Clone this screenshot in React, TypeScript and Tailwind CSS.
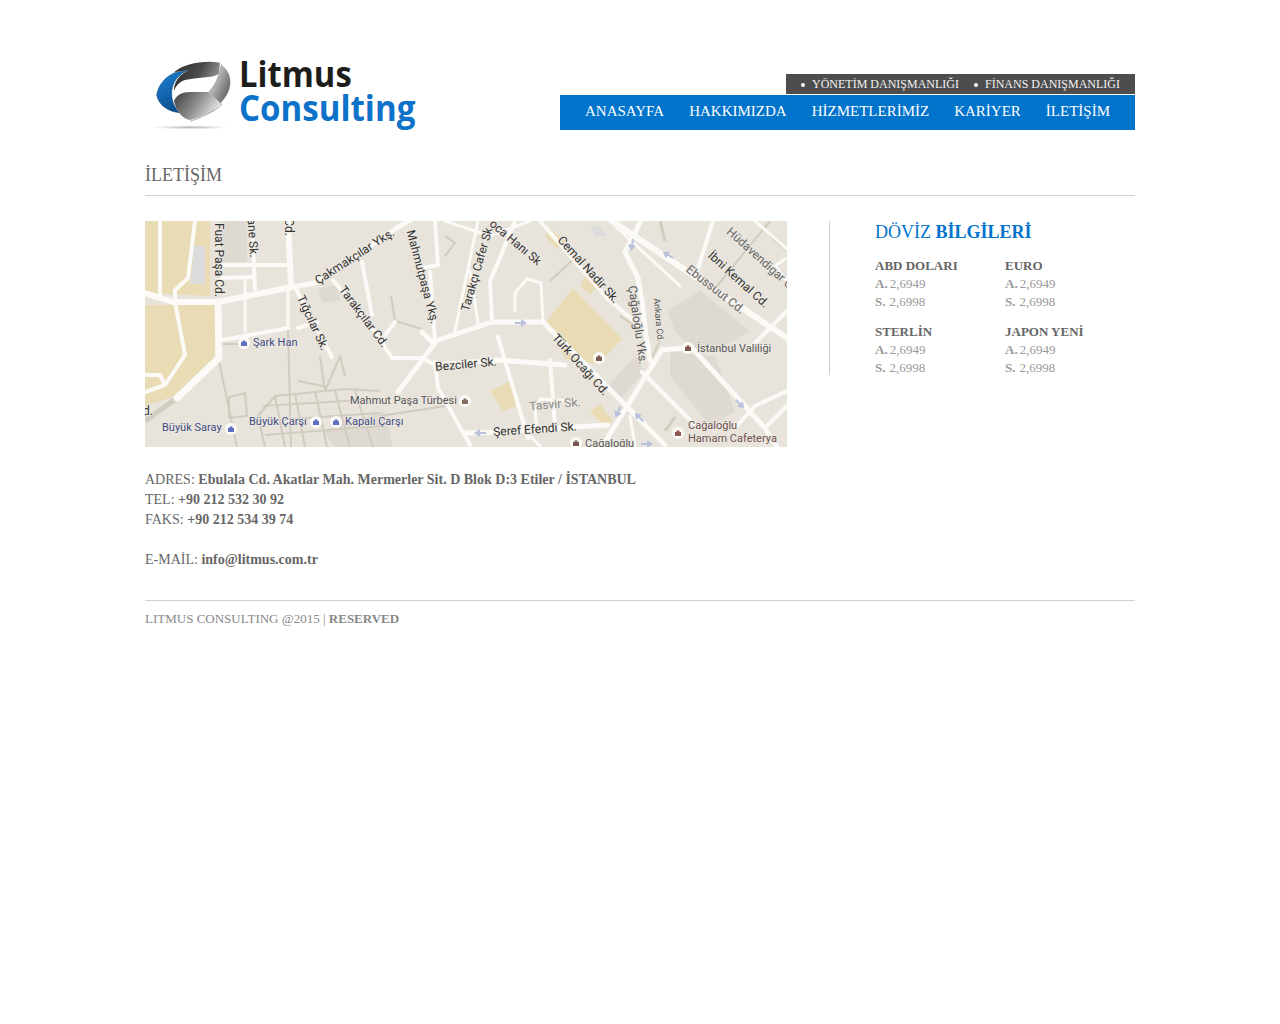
const serif = { fontFamily: '"Liberation Serif", "Times New Roman", serif' }

const navItems = ['ANASAYFA', 'HAKKIMIZDA', 'HİZMETLERİMİZ', 'KARİYER', 'İLETİŞİM']

const rates = [
  { name: 'ABD DOLARI' },
  { name: 'EURO' },
  { name: 'STERLİN' },
  { name: 'JAPON YENİ' },
]

function Logo() {
  return (
    <svg width="290" height="90" viewBox="15 0 870 270" className="block">
      <defs>
        <linearGradient id="lgTop" x1="0" y1="0" x2="1" y2="0.3">
          <stop offset="0" stopColor="#2b2b2b" />
          <stop offset="0.6" stopColor="#4a4a4a" />
          <stop offset="1" stopColor="#8d8d8d" />
        </linearGradient>
        <linearGradient id="lgRight" x1="0" y1="0" x2="1" y2="0.6">
          <stop offset="0" stopColor="#f4f4f4" />
          <stop offset="0.6" stopColor="#b5b5b5" />
          <stop offset="1" stopColor="#555" />
        </linearGradient>
        <linearGradient id="lgInner" x1="0" y1="0" x2="1" y2="0.4">
          <stop offset="0" stopColor="#3c3c3c" />
          <stop offset="0.55" stopColor="#8e8e8e" />
          <stop offset="1" stopColor="#e4e4e4" />
        </linearGradient>
        <linearGradient id="lgBlue" x1="0" y1="0" x2="0.5" y2="1">
          <stop offset="0" stopColor="#1c82d6" />
          <stop offset="1" stopColor="#0b4f8f" />
        </linearGradient>
        <radialGradient id="lgShadow">
          <stop offset="0" stopColor="#b8b8b8" />
          <stop offset="1" stopColor="#ffffff" />
        </radialGradient>
      </defs>
      <ellipse cx="150" cy="232" rx="115" ry="6" fill="url(#lgShadow)" />
      <path d="M50 135 C55 105 75 80 105 68 L145 60 C115 72 98 95 95 125 C94 150 102 170 118 188 C85 185 55 165 50 135 Z" fill="url(#lgBlue)" stroke="#0a3f70" strokeWidth="1.5" />
      <path d="M102 67 C130 42 190 30 240 38 L236 72 C215 85 170 82 135 90 C118 96 108 108 102 122 C100 100 118 72 147 60 Z" fill="url(#lgTop)" />
      <path d="M243 44 C265 60 276 85 268 115 C258 155 205 200 150 214 C190 198 225 185 246 164 L206 126 C222 108 234 92 243 44 Z" fill="url(#lgRight)" stroke="#777" strokeWidth="1" />
      <path d="M102 152 C110 136 126 126 150 126 L205 126 L246 165 C220 185 185 200 150 210 C125 205 107 180 102 152 Z" fill="url(#lgInner)" />
      <text x="297" y="110" textLength="338" lengthAdjust="spacingAndGlyphs" fill="#1d1d1b" fontSize="108" fontWeight="700" fontFamily='"Open Sans", sans-serif'>Litmus</text>
      <text x="297" y="212" textLength="529" lengthAdjust="spacingAndGlyphs" fill="#0d72c9" fontSize="108" fontWeight="700" fontFamily='"Open Sans", sans-serif'>Consulting</text>
    </svg>
  )
}

const whiteRoads: [string, number][] = [
  ['M147 66 L170 62 L253 6 L267 -2', 5],
  ['M0 72 L28 81 L73 81 L147 66', 6],
  ['M73 81 L74 137 L32 177', 7],
  ['M143 0 L146 66', 6],
  ['M143 66 L143 107', 3],
  ['M78 119 L143 107', 4],
  ['M100 59 L100 111', 3],
  ['M77 44 L147 44', 4],
  ['M107 0 L110 69', 4],
  ['M77 57 L108 56', 4],
  ['M15 0 L15 74', 4],
  ['M50 0 L43 57 L30 69 L30 81 L40 134 L20 164 L0 171', 4],
  ['M0 154 L15 154 L20 164', 4],
  ['M150 66 L187 136', 4],
  ['M153 107 L173 101', 4],
  ['M188 59 L230 111 L247 137 L277 137 L290 144', 4],
  ['M217 41 L227 94', 4],
  ['M250 101 L240 114', 4],
  ['M290 0 L293 44 L277 47', 4],
  ['M285 51 L290 121', 4],
  ['M277 111 L287 121 L347 101 L398 101', 5],
  ['M290 122 L253 171', 5],
  ['M290 141 L293 167 L325 224', 4],
  ['M290 144 L353 139 L420 144', 5],
  ['M398 101 L520 224', 5],
  ['M395 0 L463 78 L495 105', 4],
  ['M398 101 L396 62 L382 58 L370 72 L370 90', 3],
  ['M497 -2 L480 31 L493 57 L497 81 L500 107 L505 140', 5],
  ['M467 0 L642 117', 6],
  ['M540 127 L517 129 L458 224', 5],
  ['M547 127 L620 207 L632 226', 5],
  ['M497 151 L553 207', 4],
  ['M568 0 L550 57', 4],
  ['M353 116 L383 217', 4],
  ['M405 139 L410 205', 4],
  ['M320 212 L353 211 L463 204', 5],
  ['M430 180 L395 178 L390 190 L392 208', 3],
  ['M333 0 L310 110', 3],
  ['M347 101 L345 60 L352 44 L370 0', 4],
  ['M333 102 L325 50', 3],
  ['M300 0 L345 15 L385 0', 3],
  ['M610 0 L642 28', 3],
  ['M640 38 L630 45 L642 60', 3],
  ['M605 127 L642 90', 4],
  ['M590 207 L610 185 L642 170', 4],
  ['M620 207 L642 185', 4],
  ['M490 225 L485 195', 3],
  ['M395 225 L385 215', 3],
  ['M535 65 L470 5', 3],
]

const greyRoads: [string, number][] = [
  ['M77 123 L98 123 L100 111', 2],
  ['M74 140 L92 226', 2],
  ['M143 107 L146 226', 2],
  ['M175 135 L180 170 M200 155 L195 135 L180 170', 2],
  ['M153 160 L178 165', 2],
  ['M84 176 L100 172 L102 195 L84 197 Z', 2],
  ['M0 200 L32 177', 5],
  ['M113 195 L130 175 L200 168 L235 170', 2],
  ['M113 195 L120 226 M130 175 L140 226 M150 172 L160 226 M170 170 L182 226 M190 170 L205 226 M210 170 L228 226', 2],
  ['M118 185 L232 178 M116 200 L235 192 M120 214 L235 205', 2],
  ['M235 195 L300 185', 2],
  ['M246 75 L250 100 L277 108', 2],
  ['M300 15 L310 22 L300 35', 2],
  ['M405 60 L432 35', 2],
  ['M475 95 L505 115', 2],
  ['M505 140 L515 120', 2],
  ['M520 210 L530 196', 3],
  ['M568 70 L625 0', 2],
  ['M625 15 L642 30', 2],
  ['M520 20 L515 0', 3],
]

const labels: { t: string; x: number; y: number; r: number; s?: number; c?: string }[] = [
  { t: 'Fuat Paşa Cd.', x: 73, y: 39, r: 90 },
  { t: 'ane Sk.', x: 107, y: 17, r: 86 },
  { t: 'Cd.', x: 143, y: 6, r: 90 },
  { t: 'Çakmakçılar Ykş.', x: 210, y: 36, r: -33 },
  { t: 'Mahmutpaşa Ykş.', x: 277, y: 56, r: 75 },
  { t: 'Tığcılar Sk.', x: 167, y: 102, r: 65 },
  { t: 'Tarakçılar Cd.', x: 218, y: 96, r: 53 },
  { t: 'Bezciler Sk.', x: 321, y: 144, r: -5 },
  { t: 'Tarakçı Cafer Sk.', x: 333, y: 47, r: -74 },
  { t: 'oca Hanı Sk', x: 370, y: 22, r: 40 },
  { t: 'Cemal Nadir Sk.', x: 443, y: 49, r: 48 },
  { t: 'Çağaloğlu Yks.', x: 492, y: 104, r: 82, c: '#555' },
  { t: 'Ankara Cd.', x: 513, y: 99, r: 85, s: 9, c: '#555' },
  { t: 'Ebussuut Cd.', x: 570, y: 69, r: 38, c: '#666' },
  { t: 'İbni Kemal Cd.', x: 593, y: 59, r: 42 },
  { t: 'Hüdavendigar Cd', x: 617, y: 40, r: 42, c: '#666' },
  { t: 'Türk Ocağı Cd.', x: 435, y: 144, r: 48 },
  { t: 'Tasvir Sk.', x: 410, y: 184, r: -5, c: '#888' },
  { t: 'Şeref Efendi Sk.', x: 390, y: 209, r: -4 },
  { t: 'd.', x: 3, y: 191, r: 0 },
]

const places: { t: string; x: number; y: number; c?: string }[] = [
  { t: 'Şark Han', x: 108, y: 122, c: '#3f4a80' },
  { t: 'Mahmut Paşa Türbesi', x: 205, y: 180, c: '#555' },
  { t: 'Büyük Çarşı', x: 104, y: 201, c: '#3f4a80' },
  { t: 'Kapalı Çarşı', x: 200, y: 201, c: '#3f4a80' },
  { t: 'Büyük Saray', x: 17, y: 207, c: '#3f4a80' },
  { t: 'İstanbul Valiliği', x: 552, y: 128, c: '#555' },
  { t: 'Cağaloğlu', x: 440, y: 223, c: '#555' },
  { t: 'Cağaloğlu', x: 543, y: 205, c: '#6b4f4f' },
  { t: 'Hamam Cafeterya', x: 543, y: 218, c: '#6b4f4f' },
]

const pins: { x: number; y: number; c: string }[] = [
  { x: 99, y: 122, c: '#5f6fc0' },
  { x: 171, y: 201, c: '#5f6fc0' },
  { x: 191, y: 201, c: '#5f6fc0' },
  { x: 86, y: 208, c: '#5f6fc0' },
  { x: 320, y: 180, c: '#8b6a62' },
  { x: 454, y: 137, c: '#7a5a52' },
  { x: 543, y: 127, c: '#7a5a52' },
  { x: 431, y: 222, c: '#7a5a52' },
  { x: 533, y: 212, c: '#8b5a52' },
]

const arrows: { x: number; y: number; r: number }[] = [
  { x: 376, y: 102, r: 0 },
  { x: 487, y: 24, r: 100 },
  { x: 523, y: 34, r: 210 },
  { x: 595, y: 183, r: 45 },
  { x: 473, y: 191, r: 115 },
  { x: 494, y: 196, r: 225 },
  { x: 335, y: 212, r: 180 },
  { x: 502, y: 223, r: 0 },
]

function MapPicture() {
  return (
    <svg width="642" height="226" viewBox="0 0 642 226" className="block">
      <rect width="642" height="226" fill="#e8e4dc" />
      <g fill="#e9dcb5">
        <path d="M0 0 L65 0 L65 75 L0 72 Z" />
        <path d="M0 84 L70 84 L70 135 L30 175 L0 185 Z" />
        <path d="M402 100 L428 67 L477 118 L453 143 L420 138 Z" />
        <path d="M345 170 L365 160 L372 185 L358 190 Z" />
        <path d="M405 7 L420 20 L412 28 L400 15 Z" />
        <path d="M440 55 L452 65 L445 74 L435 65 Z" />
        <path d="M445 190 L455 183 L468 200 L460 206 Z" />
      </g>
      <g fill="#dedad2">
        <path d="M77 0 L102 0 L102 41 L77 41 Z" />
        <path d="M172 68 L193 64 L195 80 L178 82 Z" />
        <path d="M522 90 L555 70 L605 110 L570 130 L545 125 L530 110 Z" />
        <path d="M525 130 L570 135 L590 190 L565 205 L525 155 Z" />
        <path d="M463 165 L490 135 L500 150 L475 178 Z" />
        <path d="M445 5 L455 5 L462 15 L450 15 Z" fill="#dcdcdc" />
      </g>
      <path d="M48 25 L60 25 L60 63 L45 63 L48 40 Z" fill="#dcdcdc" />
      <path d="M178 210 L240 190 L248 226 L190 226 Z" fill="#dedad2" />
      {greyRoads.map(([d, w], i) => (
        <path key={i} d={d} fill="none" stroke="#d0ccbe" strokeWidth={w} strokeLinejoin="round" />
      ))}
      {whiteRoads.map(([d, w], i) => (
        <path key={i} d={d} fill="none" stroke="#fbfaf7" strokeWidth={w} strokeLinecap="round" strokeLinejoin="round" />
      ))}
      {arrows.map((a, i) => (
        <g key={i} transform={`translate(${a.x} ${a.y}) rotate(${a.r})`} fill="#b9c1dc">
          <rect x="-6" y="-1" width="7" height="2" />
          <path d="M0 -4 L6 0 L0 4 Z" />
        </g>
      ))}
      {pins.map((p, i) => (
        <g key={i}>
          <circle cx={p.x} cy={p.y} r="6" fill="#fbfaf7" />
          <path d={`M${p.x - 3} ${p.y - 1} h6 v4 h-6 Z M${p.x - 1.5} ${p.y - 1} v-1.5 h3 v1.5`} fill={p.c} />
        </g>
      ))}
      <g fontFamily="Roboto, sans-serif">
        {labels.map((l, i) => (
          <text
            key={i}
            textAnchor="middle"
            dominantBaseline="middle"
            transform={`translate(${l.x} ${l.y}) rotate(${l.r})`}
            fontSize={l.s ?? 12}
            fill={l.c ?? '#333'}
            stroke="#ebe8e1"
            strokeWidth="1.5"
            paintOrder="stroke"
          >
            {l.t}
          </text>
        ))}
        {places.map((p, i) => (
          <text key={i} x={p.x} y={p.y} dominantBaseline="middle" fontSize="11" fill={p.c} stroke="#ebe8e1" strokeWidth="1.5" paintOrder="stroke">
            {p.t}
          </text>
        ))}
      </g>
    </svg>
  )
}

function RateBox({ name }: { name: string }) {
  return (
    <div className="w-[130px] text-[13px] leading-[18px] text-[#999]">
      <div className="font-bold text-[#666]">{name}</div>
      <div><b className="mr-[2px]">A.</b>2,6949</div>
      <div><b className="mr-[4px]">S.</b>2,6998</div>
    </div>
  )
}

export default function App() {
  return (
    <div className="min-h-[1024px] bg-white" style={serif}>
      <div className="mx-auto w-[990px] pt-[50px]">
        {/* header */}
        <div className="flex justify-between">
          <Logo />
          <div className="flex w-[575px] flex-col items-end pt-[24px]">
            <div className="flex h-[20px] w-[349px] items-center justify-end gap-[15px] bg-[#4d4d4d] pr-[15px] text-[12px] text-[#f2f2f2]">
              {['YÖNETİM DANIŞMANLIĞI', 'FİNANS DANIŞMANLIĞI'].map(item => (
                <span key={item} className="flex items-center gap-[7px]">
                  <span className="mt-px h-[4px] w-[4px] rounded-full bg-white" />
                  {item}
                </span>
              ))}
            </div>
            <div className="mt-px flex h-[35px] w-full items-center justify-center gap-[25px] bg-[#0073cb] pb-[2px] text-[15px] text-white">
              {navItems.map(item => <span key={item}>{item}</span>)}
            </div>
          </div>
        </div>

        <h1 className="mt-[20px] border-b border-[#cfcfcf] pb-[5px] text-[18px] leading-[30px] text-[#666]">İLETİŞİM</h1>

        {/* content */}
        <div className="mt-[25px] flex items-start">
          <MapPicture />
          <div className="ml-[42px] h-[154px] border-l border-[#cfcfcf] pl-[45px]">
            <h2 className="text-[18px] leading-[22px] text-[#0073cb]">DÖVİZ <b>BİLGİLERİ</b></h2>
            <div className="mt-[14px] grid w-[260px] grid-cols-2 gap-y-[12px]">
              {rates.map(r => <RateBox key={r.name} name={r.name} />)}
            </div>
          </div>
        </div>

        {/* address */}
        <div className="mt-[23px] text-[14px] leading-[20px] text-[#666]">
          <div>ADRES: <b>Ebulala Cd. Akatlar Mah. Mermerler Sit. D Blok D:3 Etiler / İSTANBUL</b></div>
          <div>TEL: <b>+90 212 532 30 92</b></div>
          <div>FAKS: <b>+90 212 534 39 74</b></div>
          <div className="mt-[20px]">E-MAİL: <b>info@litmus.com.tr</b></div>
        </div>

        {/* footer */}
        <div className="mt-[30px] border-t border-[#cfcfcf] pt-[8px] text-[13px] leading-[20px] text-[#888]">
          LITMUS CONSULTING @2015 | <b>RESERVED</b>
        </div>
      </div>
    </div>
  )
}
